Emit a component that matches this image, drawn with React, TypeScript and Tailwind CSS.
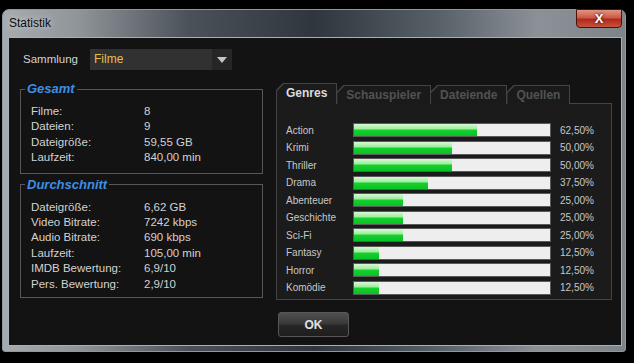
import React from 'react'

const GESAMT = [
  ['Filme:', '8'],
  ['Dateien:', '9'],
  ['Dateigröße:', '59,55 GB'],
  ['Laufzeit:', '840,00 min'],
]

const SCHNITT = [
  ['Dateigröße:', '6,62 GB'],
  ['Video Bitrate:', '7242 kbps'],
  ['Audio Bitrate:', '690 kbps'],
  ['Laufzeit:', '105,00 min'],
  ['IMDB Bewertung:', '6,9/10'],
  ['Pers. Bewertung:', '2,9/10'],
]

const GENRES = [
  { name: 'Action', pct: 62.5 },
  { name: 'Krimi', pct: 50 },
  { name: 'Thriller', pct: 50 },
  { name: 'Drama', pct: 37.5 },
  { name: 'Abenteuer', pct: 25 },
  { name: 'Geschichte', pct: 25 },
  { name: 'Sci-Fi', pct: 25 },
  { name: 'Fantasy', pct: 12.5 },
  { name: 'Horror', pct: 12.5 },
  { name: 'Komödie', pct: 12.5 },
]

const TABS = ['Genres', 'Schauspieler', 'Dateiende', 'Quellen']

function GroupBox({ title, rows, className }: { title: string; rows: string[][]; className: string }) {
  return (
    <fieldset className={`border border-[#575757] ${className}`}>
      <legend className="ml-[4px] px-[2px] text-[13px] leading-[16px] font-bold italic text-[#3d8fe4]">{title}</legend>
      <div className="pl-[10px] pt-[7px]">
        {rows.map(([label, value]) => (
          <div key={label} className="flex text-[11.5px] leading-[15.4px] text-[#d2d2d2]">
            <span className="w-[113px]">{label}</span>
            <span>{value}</span>
          </div>
        ))}
      </div>
    </fieldset>
  )
}

function Tab({ label, active }: { label: string; active?: boolean }) {
  const shape = '[clip-path:polygon(0_100%,0_7px,7px_0,100%_0,100%_100%)]'
  return (
    <div className={`${shape} -mr-[1px] bg-[#444] pt-[1px] pl-[1px] pr-[1px] ${active ? 'h-[21px] relative z-10' : 'h-[19px] mt-[2px]'}`}>
      <div
        className={`${shape} h-full px-[9px] flex items-start pt-[2px] text-[12px] font-bold leading-[14px] ${
          active ? 'bg-[#1b1b1b] text-[#dcdcdc]' : 'bg-[#1a1a1a] text-[#525252]'
        }`}
      >
        {label}
      </div>
    </div>
  )
}

function GenreRow({ name, pct }: { name: string; pct: number }) {
  return (
    <div className="flex items-center h-[14px] text-[10px] text-[#c8c8c8]">
      <span className="w-[67px]">{name}</span>
      <div className="w-[198px] h-[14px] border border-[#5a5a5a] bg-[#eeeeee]">
        <div
          className="h-full bg-[linear-gradient(180deg,#d6f9d6_0%,#9cee9c_42%,#18cf2e_50%,#06c324_100%)]"
          style={{ width: `${pct}%` }}
        />
      </div>
      <span className="ml-[9px]">{pct.toFixed(2).replace('.', ',')}%</span>
    </div>
  )
}

export default function App() {
  return (
    <div className="w-[634px] h-[363px] bg-black pt-[9px] pl-[2px] font-['Liberation_Sans',Arial,sans-serif]">
      <div className="w-[624px] h-[343px] rounded-t-[7px] rounded-b-[3px] border border-[#8d979f] bg-[linear-gradient(90deg,#a6abaf_0%,#90959a_12%,#4a5158_30%,#2f363d_50%,#586068_70%,#8b9197_86%,#7d848a_100%)] flex flex-col">
        <div className="h-[27px] flex justify-between">
          <span className="pl-[6px] pt-[6px] text-[12px] leading-[14px] text-[#0c0c0c] [text-shadow:0_0_6px_rgba(255,255,255,0.7)]">
            Statistik
          </span>
          <div className="mr-[3px] w-[46px] h-[19px] -mt-[1px] rounded-b-[4px] border border-[#4a1208] bg-[linear-gradient(180deg,#e29585_0%,#cc5a46_45%,#b3281a_55%,#c4553f_100%)] flex items-center justify-center text-[13px] font-bold text-white [text-shadow:0_0_3px_#300]">
            X
          </div>
        </div>
        <div className="ml-[5px] w-[614px] h-[309px] border border-[#a6b0b8] bg-[#131313] flex">
          <div className="w-[254px] pl-[11px] pt-[11px] flex flex-col">
            <div className="flex items-center h-[21px]">
              <span className="ml-[3px] w-[67px] text-[11.5px] text-[#d2d2d2]">Sammlung</span>
              <div className="w-[142px] h-[21px] flex bg-[#313131]">
                <span className="flex-1 pl-[4px] text-[12px] leading-[21px] text-[#e6bf48]">Filme</span>
                <div className="w-[20px] bg-[#262626] flex items-center justify-center">
                  <div className="w-0 h-0 border-l-[5px] border-r-[5px] border-t-[6px] border-l-transparent border-r-transparent border-t-[#c4c4c4]" />
                </div>
              </div>
            </div>
            <GroupBox title="Gesamt" rows={GESAMT} className="mt-[11px] w-[243px] pb-[7px]" />
            <GroupBox title="Durchschnitt" rows={SCHNITT} className="mt-[3px] w-[243px] pb-[5px]" />
          </div>
          <div className="ml-[13px] w-[336px] pt-[45px] flex flex-col">
            <div className="flex items-end h-[21px] -mb-[1px]">
              {TABS.map((t, i) => (
                <Tab key={t} label={t} active={i === 0} />
              ))}
            </div>
            <div className="h-[197px] border border-[#444] bg-[#1b1b1b] pl-[9px] pt-[19px] flex flex-col gap-[3.5px]">
              {GENRES.map((g) => (
                <GenreRow key={g.name} {...g} />
              ))}
            </div>
            <button className="mt-[12px] ml-[2px] w-[71px] h-[25px] rounded-[3px] border border-[#575757] bg-[linear-gradient(180deg,#505050_0%,#3a3a3a_45%,#262626_55%,#1e1e1e_100%)] text-[12px] font-bold text-[#e2e2e2]">
              OK
            </button>
          </div>
        </div>
      </div>
    </div>
  )
}
